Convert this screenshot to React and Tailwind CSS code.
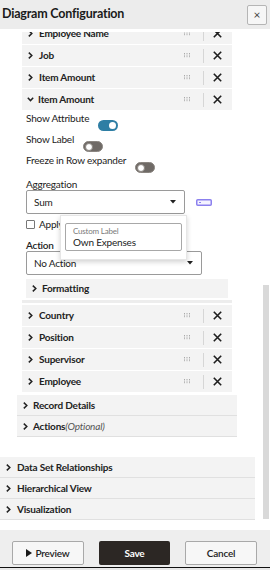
import React from "react";

const font = { fontFamily: "Lato, 'Open Sans', sans-serif" };

function Chevron({ open, className = "" }) {
  if (open) {
    return (
      <svg className={className} width="7" height="5" viewBox="0 0 7 5">
        <polyline points="0.8,0.8 3.5,3.6 6.2,0.8" fill="none" stroke="#222" strokeWidth="1.5" />
      </svg>
    );
  }
  return (
    <svg className={className} width="5" height="7" viewBox="0 0 5 7">
      <polyline points="0.8,0.6 3.8,3.5 0.8,6.4" fill="none" stroke="#222" strokeWidth="1.5" />
    </svg>
  );
}

function Grip() {
  const dots = [];
  for (let c = 0; c < 3; c++) {
    for (let r = 0; r < 3; r++) {
      dots.push(<rect key={`${c}-${r}`} x={c * 2.5} y={r * 1.6} width="1" height="1" fill="#a9a9a9" />);
    }
  }
  return (
    <svg className="ml-auto" width="7" height="5" viewBox="0 0 7 5">
      {dots}
    </svg>
  );
}

function XIcon({ className = "" }) {
  return (
    <svg className={className} width="9" height="9" viewBox="0 0 9 9">
      <path d="M0.8 0.8 L8.2 8.2 M8.2 0.8 L0.8 8.2" stroke="#1e1e1e" strokeWidth="1.6" />
    </svg>
  );
}

function AttrRow({ label, open }) {
  return (
    <div className="mb-px flex h-[21px] items-center bg-[#f3f3f3]">
      <Chevron open={open} className={open ? "ml-[5px]" : "ml-[6px]"} />
      <span className={`${open ? "ml-[4px]" : "ml-[6px]"} text-[10px] font-bold text-[#222]`}>{label}</span>
      <Grip />
      <span className="ml-[12px] h-[14px] w-px bg-[#d6d6d6]" />
      <XIcon className="ml-[9px] mr-[10px]" />
    </div>
  );
}

function Toggle({ on }) {
  if (on) {
    return (
      <span className="ml-[9px] mt-[9px] flex h-[11px] w-[20px] items-center justify-end rounded-full bg-[#2e7ea4] pr-[2px]">
        <span className="h-[7px] w-[7px] rounded-full bg-white" />
      </span>
    );
  }
  return (
    <span className="ml-[9px] mt-[9px] flex h-[11px] w-[20px] items-center rounded-full border border-[#8a8580] bg-[#6f6a66] pl-px">
      <span className="h-[8px] w-[8px] rounded-full border border-[#8a8580] bg-white" />
    </span>
  );
}

function Caret() {
  return (
    <svg width="6" height="4" viewBox="0 0 6 4">
      <path d="M0 0 L6 0 L3 3.5 Z" fill="#222" />
    </svg>
  );
}

function SectionRow({ label, pl, gap, children }) {
  return (
    <div className={`flex h-[21px] items-center border-b border-[#e0e0e0] bg-[#f3f3f3] ${pl}`}>
      <Chevron />
      <span className={`${gap} text-[10px] font-bold text-[#222]`}>
        {label}
        {children}
      </span>
    </div>
  );
}

export default function App() {
  return (
    <div className="flex h-[570px] w-[270px] flex-col overflow-hidden bg-white tracking-[-0.2px] text-[#222]" style={font}>
      <div className="flex h-[29px] shrink-0 items-center justify-between bg-[#ececec] pl-[2px] pr-[3px]">
        <span className="text-[12.5px] font-bold text-[#1a1a1a]">Diagram Configuration</span>
        <button className="flex h-[20px] w-[20px] items-center justify-center rounded-[2px] border border-[#b5b5b5] bg-[#f6f6f6] text-[12px] leading-none text-[#444]">
          ×
        </button>
      </div>
      <div className="h-[3px] shrink-0 bg-white" />
      <div className="flex h-[498px] shrink-0 overflow-hidden">
        <div className="w-[262px] shrink-0">
          <div className="-mt-[9px]">
            <div className="ml-[17px] w-[220px]">
              <div className="px-[5px]">
                <AttrRow label="Employee Name" />
                <AttrRow label="Job" />
                <AttrRow label="Item Amount" />
                <AttrRow label="Item Amount" open />
                <div className="pl-[4px] pr-[4px]">
                  <div className="flex h-[21px] items-start">
                    <span className="text-[10px] leading-[14px]">Show Attribute</span>
                    <Toggle on />
                  </div>
                  <div className="flex h-[21px] items-start">
                    <span className="text-[10px] leading-[14px]">Show Label</span>
                    <Toggle />
                  </div>
                  <div className="flex h-[21px] items-start">
                    <span className="text-[10px] leading-[14px]">Freeze in Row expander</span>
                    <Toggle />
                  </div>
                  <div className="mt-[4px] h-[12px] text-[10px] leading-[12px]">Aggregation</div>
                  <div className="flex items-center">
                    <div className="flex h-[24px] w-[159px] items-center justify-between rounded-[2px] border border-[#9a9a9a] pl-[7px] pr-[8px] text-[10px]">
                      <span>Sum</span>
                      <Caret />
                    </div>
                    <svg className="ml-[11px]" width="16" height="7" viewBox="0 0 16 7">
                      <rect x="0.75" y="0.75" width="14.5" height="5.5" rx="1" fill="#f4f3ff" stroke="#8b80ee" strokeWidth="1.5" />
                      <rect x="3" y="3" width="2" height="1" fill="#8b80ee" />
                    </svg>
                  </div>
                  <div className="relative flex h-[21px] items-center">
                    <span className="h-[9px] w-[9px] rounded-[1px] border border-[#777] bg-white" />
                    <span className="ml-[4px] text-[10px]">Apply</span>
                    <div className="absolute left-[34px] top-px z-10 h-[45px] w-[127px] border border-[#e6e6e6] bg-white px-[4px] pt-[7px] shadow-[0_2px_5px_rgba(0,0,0,0.18)]">
                      <div className="flex h-[28px] flex-col justify-center rounded-[2px] border border-[#a8a8a8] pl-[7px]">
                        <span className="text-[8px] leading-[10px] text-[#7a7a7a]">Custom Label</span>
                        <span className="text-[10px] leading-[13px] text-[#222]">Own Expenses</span>
                      </div>
                    </div>
                  </div>
                  <div className="mt-[4px] h-[12px] text-[10px] font-semibold leading-[12px]">Action</div>
                  <div className="flex h-[24px] w-[176px] items-center justify-between rounded-[2px] border border-[#9a9a9a] pl-[7px] pr-[8px] text-[10px]">
                    <span>No Action</span>
                    <Caret />
                  </div>
                  <div className="mt-[4px] flex h-[19px] items-center bg-[#f3f3f3] pl-[6px]">
                    <Chevron />
                    <span className="ml-[5px] text-[10px] font-bold">Formatting</span>
                  </div>
                </div>
                <div className="mt-[2px] h-[3px] bg-[#ededed]" />
                <div className="mt-[2px]">
                  <AttrRow label="Country" />
                  <AttrRow label="Position" />
                  <AttrRow label="Supervisor" />
                  <AttrRow label="Employee" />
                </div>
              </div>
              <div className="mt-[3px]">
                <SectionRow label="Record Details" pl="pl-[6px]" gap="ml-[5px]" />
                <SectionRow label="Actions" pl="pl-[6px]" gap="ml-[5px]">
                  <span className="font-normal italic text-[#555]">(Optional)</span>
                </SectionRow>
              </div>
            </div>
            <div className="mt-[20px] w-[255px]">
              <SectionRow label="Data Set Relationships" pl="pl-[6px]" gap="ml-[6px]" />
              <SectionRow label="Hierarchical View" pl="pl-[6px]" gap="ml-[6px]" />
              <SectionRow label="Visualization" pl="pl-[6px]" gap="ml-[6px]" />
            </div>
          </div>
        </div>
        <div className="w-[8px] shrink-0">
          <div className="ml-px mt-[253px] h-[234px] w-[6px] bg-[#d9d9d9]" />
        </div>
      </div>
      <div className="flex h-[37px] shrink-0 items-start bg-[#eeeeee] pl-[12px] pt-[11px]">
        <button className="flex h-[24px] w-[72px] items-center justify-center gap-[3px] rounded-[2px] border border-[#a9a9a9] bg-[#f7f7f7] text-[10px] font-semibold text-[#222]">
          <svg width="6" height="8" viewBox="0 0 6 8">
            <path d="M0 0 L6 4 L0 8 Z" fill="#1a1a1a" />
          </svg>
          Preview
        </button>
        <button className="ml-[15px] flex h-[24px] w-[71px] items-center justify-center rounded-[2px] bg-[#2c2724] text-[10px] font-bold text-white">
          Save
        </button>
        <button className="ml-[15px] flex h-[24px] w-[72px] items-center justify-center rounded-[2px] border border-[#a9a9a9] bg-[#f7f7f7] text-[10px] font-semibold text-[#222]">
          Cancel
        </button>
      </div>
      <div className="h-px shrink-0 bg-[#111]" />
      <div className="h-[2px] shrink-0 bg-[#e8e8e8]" />
    </div>
  );
}
